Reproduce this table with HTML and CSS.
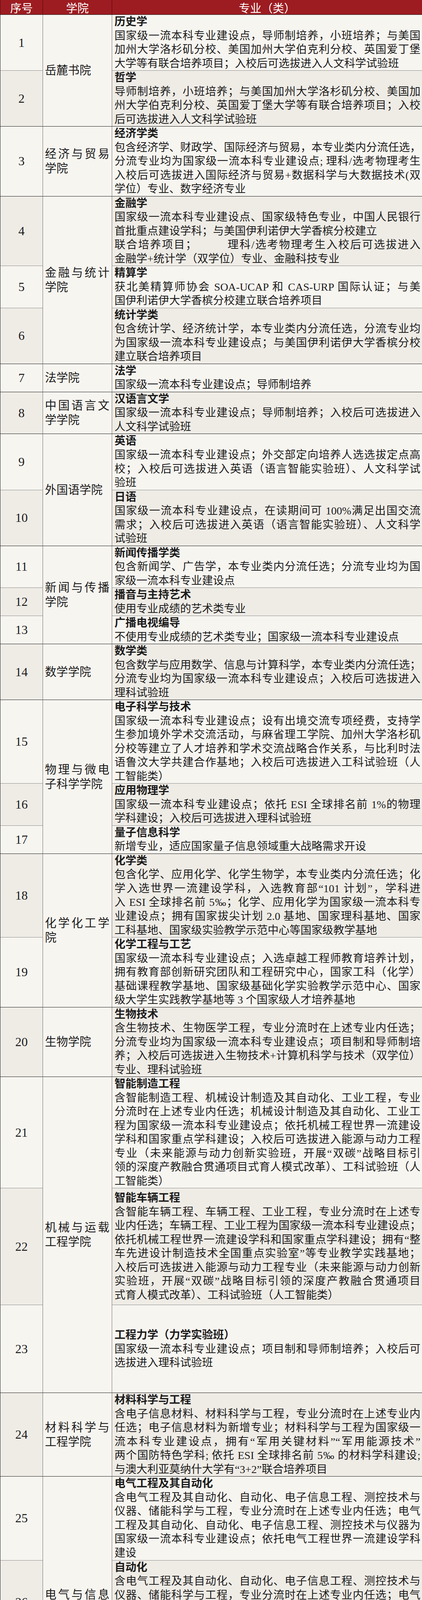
FILE: index.html
```html
<!DOCTYPE html>
<html lang="zh-CN">
<head>
<meta charset="utf-8">
<title>专业（类）一览</title>
<link rel="stylesheet" href="styles.css">
</head>
<body>
<table class="tbl">
<colgroup><col class="c1"><col class="c2"><col class="c3"></colgroup>
<thead>
<tr><th>序号</th><th>学院</th><th>专业（类）</th></tr>
</thead>
<tbody>
<tr class="g"><td class="n">1</td><td class="c" rowspan="2">岳麓书院</td><td class="m"><div class="t">历史学</div><div class="l">国家级一流本科专业建设点，导师制培养，小班培养；与美国</div><div class="l">加州大学洛杉矶分校、美国加州大学伯克利分校、英国爱丁堡</div><div class="l">大学等有联合培养项目；入校后可选拔进入人文科学试验班</div></td></tr>
<tr class="e"><td class="n">2</td><td class="m"><div class="t">哲学</div><div class="l">导师制培养，小班培养；与美国加州大学洛杉矶分校、美国加</div><div class="l">州大学伯克利分校、英国爱丁堡大学等有联合培养项目；入校</div><div class="l">后可选拔进入人文科学试验班</div></td></tr>
<tr class="g"><td class="n">3</td><td class="c">经济与贸易学院</td><td class="m"><div class="t">经济学类</div><div class="l">包含经济学、财政学、国际经济与贸易，本专业类内分流任选，</div><div class="l">分流专业均为国家级一流本科专业建设点; 理科/选考物理考生</div><div class="l">入校后可选拔进入国际经济与贸易+数据科学与大数据技术(双</div><div class="l">学位）专业、数字经济专业</div></td></tr>
<tr class="g e"><td class="n">4</td><td class="c" rowspan="3">金融与统计学院</td><td class="m"><div class="t">金融学</div><div class="l">国家级一流本科专业建设点、国家级特色专业，中国人民银行</div><div class="l x">首批重点建设学科；与美国伊利诺伊大学香槟分校建立</div><div class="l">联合培养项目；　　　理科/选考物理考生入校后可选拔进入</div><div class="l">金融学+统计学（双学位）专业、金融科技专业</div></td></tr>
<tr><td class="n">5</td><td class="m"><div class="t">精算学</div><div class="l">获北美精算师协会 SOA-UCAP 和 CAS-URP 国际认证；与美</div><div class="l">国伊利诺伊大学香槟分校建立联合培养项目</div></td></tr>
<tr class="e"><td class="n">6</td><td class="m"><div class="t">统计学类</div><div class="l">包含统计学、经济统计学，本专业类内分流任选，分流专业均</div><div class="l">为国家级一流本科专业建设点；与美国伊利诺伊大学香槟分校</div><div class="l">建立联合培养项目</div></td></tr>
<tr class="g"><td class="n">7</td><td class="c">法学院</td><td class="m"><div class="t">法学</div><div class="l">国家级一流本科专业建设点；导师制培养</div></td></tr>
<tr class="g e"><td class="n">8</td><td class="c">中国语言文学学院</td><td class="m"><div class="t">汉语言文学</div><div class="l">国家级一流本科专业建设点；导师制培养；入校后可选拔进入</div><div class="l">人文科学试验班</div></td></tr>
<tr class="g"><td class="n">9</td><td class="c" rowspan="2">外国语学院</td><td class="m"><div class="t">英语</div><div class="l">国家级一流本科专业建设点；外交部定向培养人选选拔定点高</div><div class="l">校；入校后可选拔进入英语（语言智能实验班）、人文科学试</div><div class="l">验班</div></td></tr>
<tr class="e"><td class="n">10</td><td class="m"><div class="t">日语</div><div class="l">国家级一流本科专业建设点，在读期间可 100%满足出国交流</div><div class="l">需求；入校后可选拔进入英语（语言智能实验班）、人文科学</div><div class="l">试验班</div></td></tr>
<tr class="g"><td class="n">11</td><td class="c" rowspan="3">新闻与传播学院</td><td class="m"><div class="t">新闻传播学类</div><div class="l">包含新闻学、广告学，本专业类内分流任选；分流专业均为国</div><div class="l">家级一流本科专业建设点</div></td></tr>
<tr class="e"><td class="n">12</td><td class="m"><div class="t">播音与主持艺术</div><div class="l">使用专业成绩的艺术类专业</div></td></tr>
<tr><td class="n">13</td><td class="m"><div class="t">广播电视编导</div><div class="l">不使用专业成绩的艺术类专业；国家级一流本科专业建设点</div></td></tr>
<tr class="g e"><td class="n">14</td><td class="c">数学学院</td><td class="m"><div class="t">数学类</div><div class="l">包含数学与应用数学、信息与计算科学，本专业类内分流任选；</div><div class="l">分流专业均为国家级一流本科专业建设点；入校后可选拔进入</div><div class="l">理科试验班</div></td></tr>
<tr class="g"><td class="n">15</td><td class="c" rowspan="3">物理与微电子科学学院</td><td class="m"><div class="t">电子科学与技术</div><div class="l">国家级一流本科专业建设点；设有出境交流专项经费，支持学</div><div class="l">生参加境外学术交流活动，与麻省理工学院、加州大学洛杉矶</div><div class="l">分校等建立了人才培养和学术交流战略合作关系，与比利时法</div><div class="l">语鲁汶大学共建合作基地；入校后可选拔进入工科试验班（人</div><div class="l">工智能类）</div></td></tr>
<tr class="e"><td class="n">16</td><td class="m"><div class="t">应用物理学</div><div class="l">国家级一流本科专业建设点；依托 ESI 全球排名前 1%的物理</div><div class="l">学科建设；入校后可选拔进入理科试验班</div></td></tr>
<tr><td class="n">17</td><td class="m"><div class="t">量子信息科学</div><div class="l">新增专业，适应国家量子信息领域重大战略需求开设</div></td></tr>
<tr class="g e"><td class="n">18</td><td class="c" rowspan="2">化学化工学院</td><td class="m"><div class="t">化学类</div><div class="l">包含化学、应用化学、化学生物学，本专业类内分流任选；化</div><div class="l">学入选世界一流建设学科，入选教育部“101 计划”，学科进</div><div class="l">入 ESI 全球排名前 5‰；化学、应用化学为国家级一流本科专</div><div class="l">业建设点；拥有国家拔尖计划 2.0 基地、国家理科基地、国家</div><div class="l">工科基地、国家级实验教学示范中心等国家级教学基地</div></td></tr>
<tr><td class="n">19</td><td class="m"><div class="t">化学工程与工艺</div><div class="l">国家级一流本科专业建设点；入选卓越工程师教育培养计划，</div><div class="l">拥有教育部创新研究团队和工程研究中心，国家工科（化学）</div><div class="l">基础课程教学基地、国家级基础化学实验教学示范中心、国家</div><div class="l">级大学生实践教学基地等 3 个国家级人才培养基地</div></td></tr>
<tr class="g e"><td class="n">20</td><td class="c">生物学院</td><td class="m"><div class="t">生物技术</div><div class="l">含生物技术、生物医学工程，专业分流时在上述专业内任选；</div><div class="l">分流专业均为国家级一流本科专业建设点；项目制和导师制培</div><div class="l">养；入校后可选拔进入生物技术+计算机科学与技术（双学位）</div><div class="l">专业、理科试验班</div></td></tr>
<tr class="g"><td class="n">21</td><td class="c" rowspan="3">机械与运载工程学院</td><td class="m"><div class="t">智能制造工程</div><div class="l">含智能制造工程、机械设计制造及其自动化、工业工程，专业</div><div class="l">分流时在上述专业内任选；机械设计制造及其自动化、工业工</div><div class="l">程为国家级一流本科专业建设点；依托机械工程世界一流建设</div><div class="l">学科和国家重点学科建设；入校后可选拔进入能源与动力工程</div><div class="l">专业（未来能源与动力创新实验班，开展“双碳”战略目标引</div><div class="l">领的深度产教融合贯通项目式育人模式改革）、工科试验班（人</div><div class="l">工智能类）</div></td></tr>
<tr class="e h299"><td class="n">22</td><td class="m"><div class="t">智能车辆工程</div><div class="l">含智能车辆工程、车辆工程、工业工程，专业分流时在上述专</div><div class="l">业内任选；车辆工程、工业工程为国家级一流本科专业建设点；</div><div class="l">依托机械工程世界一流建设学科和国家重点学科建设；拥有“整</div><div class="l">车先进设计制造技术全国重点实验室”等专业教学实践基地；</div><div class="l">入校后可选拔进入能源与动力工程专业（未来能源与动力创新</div><div class="l">实验班，开展“双碳”战略目标引领的深度产教融合贯通项目</div><div class="l">式育人模式改革）、工科试验班（人工智能类）</div></td></tr>
<tr class="h225"><td class="n">23</td><td class="m"><div class="t">工程力学（力学实验班）</div><div class="l">国家级一流本科专业建设点；项目制和导师制培养；入校后可</div><div class="l">选拔进入理科试验班</div></td></tr>
<tr class="g e"><td class="n">24</td><td class="c">材料科学与工程学院</td><td class="m"><div class="t">材料科学与工程</div><div class="l">含电子信息材料、材料科学与工程，专业分流时在上述专业内</div><div class="l">任选；电子信息材料为新增专业；材料科学与工程为国家级一</div><div class="l">流本科专业建设点，拥有“军用关键材料”“军用能源技术”</div><div class="l">两个国防特色学科; 依托 ESI 全球排名前 5‰ 的材料学科建设;</div><div class="l">与澳大利亚莫纳什大学有“3+2”联合培养项目</div></td></tr>
<tr class="g"><td class="n">25</td><td class="c" rowspan="3">电气与信息工程学院</td><td class="m"><div class="t">电气工程及其自动化</div><div class="l">含电气工程及其自动化、自动化、电子信息工程、测控技术与</div><div class="l">仪器、储能科学与工程，专业分流时在上述专业内任选；电气</div><div class="l">工程及其自动化、自动化、电子信息工程、测控技术与仪器为</div><div class="l">国家级一流本科专业建设点；依托电气工程世界一流建设学科</div><div class="l">建设</div></td></tr>
<tr class="e"><td class="n">26</td><td class="m"><div class="t">自动化</div><div class="l">含电气工程及其自动化、自动化、电子信息工程、测控技术与</div><div class="l">仪器、储能科学与工程，专业分流时在上述专业内任选；电气</div><div class="l">工程及其自动化、自动化、电子信息工程、测控技术与仪器为</div><div class="l">国家级一流本科专业建设点；依托电气工程世界一流建设学科</div><div class="l">建设</div></td></tr>
<tr><td class="n">27</td><td class="m"><div class="t">电子信息工程</div><div class="l">含电气工程及其自动化、自动化、电子信息工程、测控技术与</div><div class="l">仪器、储能科学与工程，专业分流时在上述专业内任选；电气</div><div class="l">工程及其自动化、自动化、电子信息工程、测控技术与仪器为</div><div class="l">国家级一流本科专业建设点；依托电气工程世界一流建设学科</div><div class="l">建设；入校后可选拔进入工科试验班（人工智能类）</div></td></tr>
<tr class="g e"><td class="n">28</td><td class="c" rowspan="3">信息科学与工程学院</td><td class="m"><div class="t">计算机科学与技术</div><div class="l">含计算机科学与技术、软件工程，专业分流时在上述专业内任</div><div class="l">选；分流专业均为国家级一流本科专业建设点；软件工程为国</div><div class="l">家级特色专业；拥有国家拔尖计划 2.0 基地；入选教育部“101</div><div class="l">计划”；获批国家特色化示范性软件学院；入校后可选拔进入</div><div class="l">工科试验班（人工智能类）</div></td></tr>
<tr><td class="n">29</td><td class="m"><div class="t">计算机科学与技术（人工智能实验班）</div><div class="l">含智能科学与技术、物联网工程、数字媒体技术、数据科学与</div><div class="l">大数据技术，专业分流时在上述专业内任选；计算机科学与技</div><div class="l">术、数字媒体技术、智能科学与技术为国家级一流本科专业建</div><div class="l">设点；拥有国家拔尖计划 2.0 基地；入选教育部“101 计划”；</div><div class="l">入校后可选拔进入工科试验班（人工智能类）</div></td></tr>
<tr class="e"><td class="n">30</td><td class="m"><div class="t">通信工程</div><div class="l">国家级一流本科专业建设点；入校后可选拔进入工科试验班</div><div class="l">（人工智能类）</div></td></tr>
<tr class="g"><td class="n">31</td><td class="c">网络空间安全学院</td><td class="m"><div class="t">信息安全</div><div class="l">含信息安全、保密技术，专业分流时在上述专业内任选；信息</div><div class="l">安全为国家级一流本科专业建设点；依托国家一流网络安全学</div><div class="l">院（全国共 16 所）和国家保密学院建设</div></td></tr>
<tr class="g e h226"><td class="n">32</td><td class="c">建筑与规划学院</td><td class="m"><div class="t">建筑学</div><div class="l">含建筑学、城乡规划，专业分流时在上述专业内任选；分流专</div><div class="l">业均为国家级一流本科专业建设点；与奥克兰大学等海外高校</div><div class="l">签署联合培养协议，与米兰理工大学等海外高校建立学分互认</div><div class="l">机制，专业学位国际认证</div></td></tr>
<tr class="g"><td class="n">33</td><td class="c" rowspan="3">土木工程学院</td><td class="m"><div class="t">土木工程</div><div class="l">含智能建造、土木工程、工程管理，专业分流时在上述专业内</div><div class="l">任选；土木工程、工程管理为国家级一流本科专业建设点；国</div><div class="l">家级特色专业，国家卓越计划试点专业；依托国家重点学科建</div><div class="l">设，拥有“桥梁工程安全与韧性全国重点实验室”“建筑安全</div><div class="l">与节能教育部重点实验室”等专业教学实践基地；与新加坡国</div><div class="l">立大学签署“3+1+1”本硕联合培养项目；入校后可选拔进入</div><div class="l">工科试验班（人工智能类）</div></td></tr>
<tr class="e"><td class="n">34</td><td class="m"><div class="t">给排水科学与工程</div><div class="l">国家级一流本科专业建设点; 依托国家重点学科建设, 拥有“建</div><div class="l">筑安全与节能教育部重点实验室”等专业教学实践基地</div></td></tr>
<tr><td class="n">35</td><td class="m"><div class="t">建筑环境与能源应用工程（低碳建筑实验班）</div><div class="l">国家级一流本科专业建设点；国家级特色专业；依托国家重点</div><div class="l">学科建设，拥有“建筑安全与节能教育部重点实验室”等专业</div><div class="l">教学实践基地；与香港理工大学签署交换生项目、建立学分互</div><div class="l">认机制</div></td></tr>
<tr class="g e"><td class="n">36</td><td class="c">环境科学与工程学院</td><td class="m"><div class="t">环境科学与工程类</div><div class="l">包含环境科学、环境工程，本专业类内分流任选；环境工程为</div><div class="l">国家级一流本科专业建设点；依托 ESI 全球排名前 1‰的环境</div><div class="l">生态学学科建设</div></td></tr>
<tr class="g"><td class="n">37</td><td class="c" rowspan="3">工商管理学院</td><td class="m"><div class="t">工商管理</div><div class="l">含工商管理（组织数智管理）、市场营销（智慧营销），专业</div><div class="l">分流时在上述专业内任选；分流专业均为国家级一流本科专业</div><div class="l">建设点；国家级特色专业</div></td></tr>
<tr class="e"><td class="n">38</td><td class="m"><div class="t">大数据管理与应用</div><div class="l">含大数据管理与应用（商务大数据）、大数据管理与应用（金</div><div class="l">融大数据），专业分流时在上述专业内任选</div></td></tr>
<tr><td class="n">39</td><td class="m"><div class="t">会计学</div><div class="l">含会计学（智慧会计）、会计学（ACCA）、财务管理（智慧</div><div class="l">公司金融），专业分流时在上述专业内任选；分流专业均为国</div><div class="l">家级一流本科专业建设点；会计学（ACCA）培养国际化人才，</div><div class="l">出国深造率高</div></td></tr>
<tr class="g e"><td class="n">40</td><td class="c">公共管理学院</td><td class="m"><div class="t">行政管理</div><div class="l">含行政管理、城市管理，专业分流时在上述专业内任选；行政</div><div class="l">管理为国家级一流本科专业建设点；导师制培养</div></td></tr>
<tr class="g"><td class="n">41</td><td class="c" rowspan="2">设计艺术学院</td><td class="m"><div class="t">工业设计</div><div class="l">国家级一流本科专业建设点；学校是教育部工业设计专业教学</div><div class="l">指导分委员会主任单位</div></td></tr>
<tr class="e"><td class="n">42</td><td class="m"><div class="t">产品设计</div><div class="l">使用专业成绩的艺术类专业；聚焦数字文化创新方向</div></td></tr>
<tr class="g"><td class="n">43</td><td class="c">机器人学院</td><td class="m"><div class="t">人工智能</div><div class="l">含人工智能、机器人工程，专业分流时在上述专业内任选；依</div><div class="l">托机器人视觉感知与控制技术国家工程研究中心建设；入校后</div><div class="l">可选拔进入工科试验班（人工智能类）</div></td></tr>
<tr class="g e h197"><td class="n">44</td><td class="c">马克思主义学院</td><td class="m"><div class="t">马克思主义理论</div><div class="l">导师制培养；依托全国重点马克思主义学院建设</div></td></tr>
<tr class="g"><td class="n">45</td><td class="c" rowspan="2">半导体学院</td><td class="m"><div class="t">微电子科学与工程</div><div class="l">应用于 5G 通讯、新能源汽车、人工智能国家战略性高新技术</div><div class="l">领域；依托功率半导体与集成技术全国重点实验室、国家第三</div><div class="l">代半导体技术创新中心、先进半导体技术与应用教育部工程研</div><div class="l">究中心等科研平台建设；入校后可选拔进入工科试验班（人工</div><div class="l">智能类）</div></td></tr>
<tr class="e"><td class="n">46</td><td class="m"><div class="t">集成电路设计与集成系统</div><div class="l">新增专业，适应芯片设计与系统开发领域急需创新人才开设；</div><div class="l">依托功率半导体与集成技术国家重点实验室建设；入校后可选</div><div class="l">拔进入工科试验班（人工智能类）</div></td></tr>
<tr class="g"><td class="n">47</td><td class="c">生命医学交叉研究院</td><td class="m"><div class="t">药学</div><div class="l">联合湖南大学附属医院培养</div></td></tr>
</tbody>
</table>
<div class="notes">
<p>注:</p>
<p>*理科/选考物理考生入校后可选拔进入计算机科学与技术拔尖<br>班、机器人工程科创试验班、机器人工程拔尖创新班;</p>
<p>*理科/选考物理+化学考生入校后还可选拔进入化学拔尖班。</p>
</div>
</body>
</html>
```

FILE: styles.css
```css
* { box-sizing: border-box; }
html, body { margin: 0; padding: 0; background: #ffffff; }
body {
  width: 1080px;
  font-family: "Liberation Serif", "Noto Sans CJK SC", serif;
  color: #1b1b1b;
}
.tbl {
  width: 1080px;
  table-layout: fixed;
  border-collapse: separate;
  border-spacing: 0;
  border-right: 1px solid #3a3a3a;
  border-bottom: 1px solid #1e1e1e;
}
col.c1 { width: 109px; }
col.c2 { width: 177px; }
col.c3 { width: 794px; }

th {
  height: 37px;
  padding: 0;
  background: #9d1c21;
  color: #ffffff;
  font-family: "Noto Sans CJK SC", sans-serif;
  font-weight: 400;
  font-size: 29px;
  line-height: 36px;
  text-align: center;
  border-left: 1px solid #4a0a0d;
}
td {
  padding: 0;
  vertical-align: middle;
  background: #f7f5f0;
  border-top: 1px solid #8e8e8e;
  border-left: 1px solid #707070;
}
tr.g td { border-top-color: #1e1e1e; }
tr.e td.n, tr.e td.m { background: #efece6; }

td.n {
  text-align: center;
  font-size: 32px;
  line-height: 35px;
  border-left-color: #1e1e1e;
}
td.c {
  padding: 0 6px 0 5px;
  font-size: 29.5px;
  line-height: 37px;
  text-align: justify;
  background: #f7f5f0;
}
td.m {
  padding: 0 4px 0 6px;
  font-size: 28px;
  line-height: 35.52px;
}
.t { font-weight: 700; white-space: nowrap; }
.l {
  white-space: nowrap;
  text-align: left;
  text-align-last: justify;
}
.l:last-child, .l.x { text-align-last: auto; }

tr.h299 { height: 299px; }
tr.h225 { height: 225px; }
tr.h226 { height: 226px; }
tr.h197 { height: 197px; }

.notes {
  padding: 4px 14px 0 14px;
  font-size: 36px;
  line-height: 78px;
  color: #111111;
}
.notes p {
  margin: 0;
  text-indent: 72px;
  white-space: nowrap;
}
```
